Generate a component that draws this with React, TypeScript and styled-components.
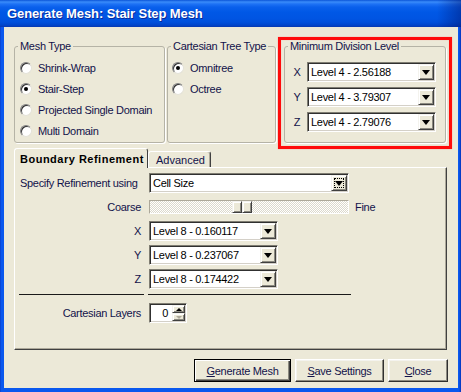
import React from "react";
import styled, { createGlobalStyle, css } from "styled-components";

const GlobalStyle = createGlobalStyle`
  html, body {
    margin: 0;
    padding: 0;
    background: #ece9d8;
  }
  body {
    font-family: "Liberation Sans", Arial, sans-serif;
    font-size: 11px;
    letter-spacing: -0.3px;
    color: #12124a;
  }
`;

const Window = styled.div`
  width: 461px;
  height: 392px;
  display: flex;
  flex-direction: column;
  overflow: hidden;
  background: linear-gradient(
    to right,
    #0a36c0 0,
    #0a58ee 1px,
    #0a58ee calc(100% - 2px),
    #0633b8 100%
  );
`;

const TitleBar = styled.div`
  height: 27px;
  flex-shrink: 0;
  display: flex;
  align-items: center;
  padding-left: 7px;
  color: #fff;
  font: bold 13px "Liberation Sans", Arial, sans-serif;
  letter-spacing: -0.1px;
  text-shadow: 1px 1px 0 #0b2a9a;
  background: linear-gradient(to right, transparent calc(100% - 24px), rgba(0, 20, 110, 0.45)),
    linear-gradient(
      180deg,
      #0b55d8 0px,
      #3a8cfa 2px,
      #1e72f5 4px,
      #0a60ec 7px,
      #0058e6 12px,
      #0055e3 18px,
      #0050dc 22px,
      #0046cc 25px,
      #0838b0 27px
    );
`;

const Body = styled.div`
  flex: 1;
  margin: 0 3px 4px 4px;
  padding: 13px 10px 0 10px;
  background: #ece9d8;
  display: flex;
  flex-direction: column;
`;

const TopRow = styled.div`
  display: flex;
  align-items: flex-start;
`;

const Group = styled.fieldset<{ $w: number }>`
  flex-shrink: 0;
  width: ${(p) => p.$w}px;
  height: 103px;
  min-width: 0;
  box-sizing: border-box;
  margin: 0 2px 0 0;
  padding: 0;
  border: 1px solid #b5b3a6;
  border-radius: 3px;
  box-shadow: 1px 1px 0 #fff;
`;

const Caption = styled.legend`
  margin-left: 3px;
  padding: 0 2px;
  line-height: 13px;
`;

const RadioList = styled.div<{ $pl: number }>`
  display: flex;
  flex-direction: column;
  padding: 4px 0 0 ${(p) => p.$pl}px;
`;

const RadioRow = styled.label`
  height: 21px;
  display: flex;
  align-items: center;
  gap: 6px;
  white-space: nowrap;
`;

const RadioDot = styled.span<{ $on?: boolean }>`
  position: relative;
  width: 12px;
  height: 12px;
  box-sizing: border-box;
  border-radius: 50%;
  background: #fff;
  border: 1px solid;
  border-color: #808080 #e4e2d8 #e4e2d8 #808080;
  box-shadow: inset 1px 1px 0 #303030;
  ${(p) =>
    p.$on &&
    css`
      &::after {
        content: "";
        position: absolute;
        left: 3px;
        top: 3px;
        width: 4px;
        height: 4px;
        border-radius: 50%;
        background: #000;
      }
    `}
`;

const Highlight = styled.div`
  flex-shrink: 0;
  width: 174px;
  box-sizing: border-box;
  margin: -3px 0 -3px 0;
  padding: 0 3px 3px;
  border: 3px solid #ff0b0b;
  box-shadow: 0 0 1px #ff8a8a, inset 0 0 1px #ff8a8a;
`;

const LevelList = styled.div`
  display: flex;
  flex-direction: column;
  gap: 5px;
  padding: 9px 0 0 8px;
`;

const LevelRow = styled.div`
  display: flex;
  align-items: center;
  gap: 6px;
`;

const Axis = styled.span`
  width: 8px;
  text-align: center;
`;

const Field = styled.div<{ $w: number }>`
  display: flex;
  align-items: center;
  width: ${(p) => p.$w}px;
  height: 20px;
  box-sizing: border-box;
  padding: 0 1px 0 3px;
  background: #fff;
  border: 1px solid;
  border-color: #7f7d72 #fff #fff #7f7d72;
  box-shadow: inset 1px 1px 0 #303030, inset -1px -1px 0 #d4d0c8;
  color: #000;
`;

const FieldText = styled.span`
  flex: 1;
  white-space: nowrap;
  overflow: hidden;
`;

const raised = css`
  background: #ece9d8;
  border: 1px solid;
  border-color: #f4f3ee #404040 #404040 #f4f3ee;
  box-shadow: inset 1px 1px 0 #fff, inset -1px -1px 0 #8c8a80;
`;

const DropButton = styled.span<{ $focus?: boolean }>`
  position: relative;
  width: 16px;
  height: 16px;
  box-sizing: border-box;
  display: flex;
  align-items: center;
  justify-content: center;
  ${raised}
  &::after {
    content: "";
    border-left: 4px solid transparent;
    border-right: 4px solid transparent;
    border-top: 5px solid #000;
    margin-top: 1px;
  }
  ${(p) =>
    p.$focus &&
    css`
      &::before {
        content: "";
        position: absolute;
        inset: 2px;
        border: 1px dotted #000;
      }
    `}
`;

const TabBar = styled.div`
  display: flex;
  align-items: flex-end;
  height: 20px;
  margin-top: 2px;
  margin-bottom: -1px;
  position: relative;
  z-index: 1;
`;

const Tab = styled.div<{ $active?: boolean; $w: number }>`
  width: ${(p) => p.$w}px;
  box-sizing: border-box;
  display: flex;
  align-items: center;
  background: #ece9d8;
  border: 1px solid;
  border-bottom: none;
  border-color: #fff #404040 transparent #fff;
  border-radius: 3px 3px 0 0;
  ${(p) =>
    p.$active
      ? css`
          height: 20px;
          padding-left: 5px;
          font-weight: bold;
          letter-spacing: 0.5px;
          color: #000;
        `
      : css`
          height: 16px;
          margin-bottom: 1px;
          padding-left: 7px;
          letter-spacing: 0;
          box-shadow: inset -1px 0 0 #aca899;
        `}
`;

const Pane = styled.div`
  width: 433px;
  height: 183px;
  box-sizing: border-box;
  padding: 5px 0 0 5px;
  border: 1px solid;
  border-color: #fff #404040 #404040 #fff;
  box-shadow: inset -1px -1px 0 #aca899;
`;

const Form = styled.div`
  display: grid;
  grid-template-columns: 121px auto;
  grid-template-rows: repeat(5, 20px) 6px 20px;
  column-gap: 8px;
  row-gap: 4px;
  align-items: center;
`;

const Label = styled.span<{ $left?: boolean }>`
  text-align: ${(p) => (p.$left ? "left" : "right")};
  white-space: nowrap;
`;

const SliderCell = styled.div`
  display: flex;
  align-items: center;
  gap: 6px;
`;

const Track = styled.div`
  position: relative;
  width: 200px;
  height: 14px;
  box-sizing: border-box;
  border: 1px solid;
  border-color: #aca899 #fff #fff #aca899;
  background: repeating-conic-gradient(#fff 0 25%, #dcd9cc 0 50%) 0 0 / 2px 2px;
`;

const Thumb = styled.div`
  position: absolute;
  top: 0;
  height: 12px;
  display: flex;
`;

const ThumbHalf = styled.span`
  width: 10px;
  height: 12px;
  box-sizing: border-box;
  ${raised}
`;

const Separator = styled.div<{ $side: "left" | "right" }>`
  align-self: start;
  height: 1px;
  margin-top: 1px;
  background: #1a1a1a;
  ${(p) =>
    p.$side === "left"
      ? css`
          margin-left: -1px;
          margin-right: -3px;
        `
      : css`
          margin-left: -1px;
          width: 203px;
        `}
`;

const SpinValue = styled.span`
  flex: 1;
  text-align: right;
  padding-right: 4px;
`;

const SpinButtons = styled.div`
  width: 13px;
  height: 16px;
  display: flex;
  flex-direction: column;
`;

const SpinArrow = styled.span<{ $dir: "up" | "down"; $off?: boolean }>`
  flex: 1;
  box-sizing: border-box;
  display: flex;
  align-items: center;
  justify-content: center;
  ${raised}
  &::after {
    content: "";
    border-left: 3px solid transparent;
    border-right: 3px solid transparent;
    ${(p) =>
      p.$dir === "up"
        ? css`
            border-bottom: 3px solid ${p.$off ? "#aca899" : "#000"};
          `
        : css`
            border-top: 3px solid ${p.$off ? "#aca899" : "#000"};
          `}
  }
`;

const ButtonRow = styled.div`
  display: flex;
  justify-content: flex-end;
  gap: 4px;
  margin-top: 9px;
`;

const PushButton = styled.button<{ $w: number; $default?: boolean }>`
  width: ${(p) => p.$w}px;
  height: 23px;
  box-sizing: border-box;
  padding: 0;
  font: inherit;
  letter-spacing: inherit;
  color: inherit;
  background: #ece9d8;
  border: 1px solid;
  border-color: #fff #303030 #303030 #fff;
  box-shadow: inset -1px -1px 0 #8c8a80, inset 1px 1px 0 #f4f3ee;
  ${(p) =>
    p.$default &&
    css`
      border-color: #000;
      box-shadow: inset 1px 1px 0 #fff, inset -1px -1px 0 #404040,
        inset -2px -2px 0 #8c8a80;
    `}
`;

const meshTypes = [
  "Shrink-Wrap",
  "Stair-Step",
  "Projected Single Domain",
  "Multi Domain",
];
const treeTypes = ["Omnitree", "Octree"];
const minLevels = [
  ["X", "Level 4 - 2.56188"],
  ["Y", "Level 4 - 3.79307"],
  ["Z", "Level 4 - 2.79076"],
];
const refineLevels = [
  ["X", "Level 8 - 0.160117"],
  ["Y", "Level 8 - 0.237067"],
  ["Z", "Level 8 - 0.174422"],
];

const sliderValue = 0.46;

export default function App() {
  return (
    <>
      <GlobalStyle />
      <Window>
        <TitleBar>Generate Mesh: Stair Step Mesh</TitleBar>
        <Body>
          <TopRow>
            <Group $w={151}>
              <Caption>Mesh Type</Caption>
              <RadioList $pl={5}>
                {meshTypes.map((t) => (
                  <RadioRow key={t}>
                    <RadioDot $on={t === "Stair-Step"} />
                    {t}
                  </RadioRow>
                ))}
              </RadioList>
            </Group>
            <Group $w={109}>
              <Caption>Cartesian Tree Type</Caption>
              <RadioList $pl={4}>
                {treeTypes.map((t) => (
                  <RadioRow key={t}>
                    <RadioDot $on={t === "Omnitree"} />
                    {t}
                  </RadioRow>
                ))}
              </RadioList>
            </Group>
            <Highlight>
              <Group $w={162}>
                <Caption>Minimum Division Level</Caption>
                <LevelList>
                  {minLevels.map(([axis, value]) => (
                    <LevelRow key={axis}>
                      <Axis>{axis}</Axis>
                      <Field $w={129}>
                        <FieldText>{value}</FieldText>
                        <DropButton />
                      </Field>
                    </LevelRow>
                  ))}
                </LevelList>
              </Group>
            </Highlight>
          </TopRow>

          <TabBar>
            <Tab $active $w={134}>
              Boundary Refinement
            </Tab>
            <Tab $w={63}>Advanced</Tab>
          </TabBar>
          <Pane>
            <Form>
              <Label $left>Specify Refinement using</Label>
              <Field $w={200}>
                <FieldText>Cell Size</FieldText>
                <DropButton $focus />
              </Field>

              <Label>Coarse</Label>
              <SliderCell>
                <Track>
                  <Thumb style={{ left: `${Math.round(sliderValue * 178)}px` }}>
                    <ThumbHalf />
                    <ThumbHalf />
                  </Thumb>
                </Track>
                Fine
              </SliderCell>

              {refineLevels.map(([axis, value]) => (
                <React.Fragment key={axis}>
                  <Label>{axis}</Label>
                  <Field $w={129}>
                    <FieldText>{value}</FieldText>
                    <DropButton />
                  </Field>
                </React.Fragment>
              ))}

              <Separator $side="left" />
              <Separator $side="right" />

              <Label>Cartesian Layers</Label>
              <Field $w={38}>
                <SpinValue>0</SpinValue>
                <SpinButtons>
                  <SpinArrow $dir="up" />
                  <SpinArrow $dir="down" $off />
                </SpinButtons>
              </Field>
            </Form>
          </Pane>

          <ButtonRow>
            <PushButton $w={97} $default>
              <u>G</u>enerate Mesh
            </PushButton>
            <PushButton $w={89}>
              <u>S</u>ave Settings
            </PushButton>
            <PushButton $w={60}>
              <u>C</u>lose
            </PushButton>
          </ButtonRow>
        </Body>
      </Window>
    </>
  );
}
